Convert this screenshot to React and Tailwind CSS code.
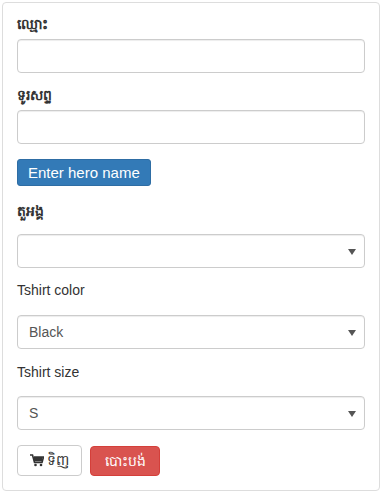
import React from "react";

function CartIcon() {
  return (
    <svg width="14" height="13" viewBox="0 0 14 13" className="mr-[3px]">
      <path d="M0 1h2.5l2 7.5h7.5l1.5-5.5H4" fill="none" stroke="#333" strokeWidth="1.6" />
      <rect x="4" y="3" width="8.5" height="4.5" fill="#333" />
      <circle cx="5.5" cy="11" r="1.3" fill="#333" />
      <circle cx="11" cy="11" r="1.3" fill="#333" />
    </svg>
  );
}

function Caret() {
  return (
    <svg width="8" height="6" viewBox="0 0 8 6" className="absolute right-[8px] top-[14px]">
      <path d="M0 0h8L4 6z" fill="#555" />
    </svg>
  );
}

function SelectBox({ value }) {
  return (
    <div className="relative h-[34px] border border-[#ccc] rounded-[4px] bg-white shadow-[inset_0_1px_1px_rgba(0,0,0,0.075)] flex items-center px-[11px] text-[14px] text-[#555]">
      {value}
      <Caret />
    </div>
  );
}

export default function App() {
  const label = "h-[20px] leading-[20px] text-[14px] text-[#333]";
  const input =
    "h-[34px] border border-[#ccc] rounded-[4px] bg-white shadow-[inset_0_1px_1px_rgba(0,0,0,0.075)]";

  return (
    <div className="p-[2px] w-[382px] h-[493px] bg-white" style={{ fontFamily: '"Liberation Sans", Arial, sans-serif' }}>
      <div className="border border-[#ddd] rounded-[4px] pt-[11px] pb-[13px] px-[14px] h-[489px]">
        <div className={`${label} font-bold mb-[5px]`}>ឈ្មោះ</div>
        <div className={input} />

        <div className={`${label} font-bold mt-[12px] mb-[5px]`}>ទូរសព្ទ</div>
        <div className={input} />

        <button className="block mt-[15px] h-[27px] px-[10px] bg-[#337ab7] border border-[#2e6da4] rounded-[3px] text-white text-[15px] leading-none">
          Enter hero name
        </button>

        <div className={`${label} font-bold mt-[15px] mb-[13px]`}>តួអង្គ</div>
        <SelectBox value="" />

        <div className={`${label} mt-[12px] mb-[15px]`}>Tshirt color</div>
        <SelectBox value="Black" />

        <div className={`${label} mt-[13px] mb-[14px]`}>Tshirt size</div>
        <SelectBox value="S" />

        <div className="flex items-start gap-[8px] mt-[15px]">
          <button className="h-[31px] w-[65px] flex items-center justify-center border border-[#ccc] rounded-[4px] bg-white text-[14px] text-[#333]">
            <CartIcon />
            ទិញ
          </button>
          <button className="mt-[1px] h-[30px] w-[70px] flex items-center justify-center bg-[#d9534f] border border-[#d43f3a] rounded-[4px] text-white text-[14px]">
            បោះបង់
          </button>
        </div>
      </div>
    </div>
  );
}
